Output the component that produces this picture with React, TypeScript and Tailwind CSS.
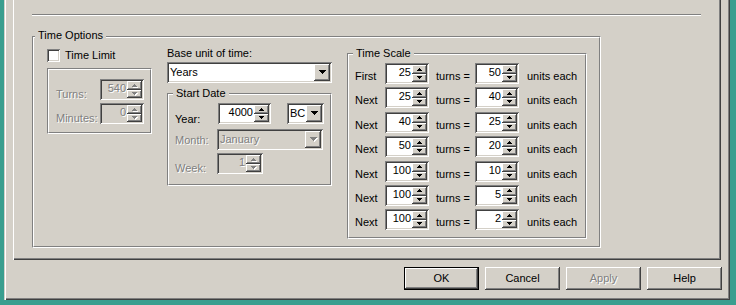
import React from 'react';

const sunken =
  'shadow-[inset_1px_1px_0_#808080,inset_-1px_-1px_0_#ffffff,inset_2px_2px_0_#404040,inset_-2px_-2px_0_#d4d0c8]';
const raised =
  'shadow-[inset_-1px_-1px_0_#404040,inset_1px_1px_0_#ffffff,inset_-2px_-2px_0_#808080,inset_2px_2px_0_#d4d0c8]';
const dis = 'text-[#808080] [text-shadow:1px_1px_0_#ffffff]';

type GroupProps = {
  label?: string;
  labelPos?: string;
  className?: string;
  inner?: string;
  children?: React.ReactNode;
};

// etched group box, label sits over the top line
const Group = ({ label, labelPos = '', className = '', inner = '', children }: GroupProps) => (
  <div
    className={`relative border border-t-[#808080] border-l-[#808080] border-r-white border-b-white ${className}`}
  >
    <div
      className={`w-full h-full border border-t-white border-l-white border-r-[#808080] border-b-[#808080] ${inner}`}
    >
      {children}
    </div>
    {label && <span className={`absolute px-[3px] bg-[#d4d0c8] ${labelPos}`}>{label}</span>}
  </div>
);

const Arrow = ({ dir, disabled }: { dir: 'up' | 'down'; disabled?: boolean }) => {
  const d = dir === 'up' ? 'M2 0h1v1h1v1h1v1H0V2h1V1h1z' : 'M0 0h5v1H4v1H3v1H2V2H1V1H0z';
  return (
    <svg width="6" height="4" viewBox="0 0 6 4" shapeRendering="crispEdges">
      {disabled && <path d={d} fill="#ffffff" transform="translate(1 1)" />}
      <path d={d} fill={disabled ? '#808080' : '#000000'} />
    </svg>
  );
};

const ComboArrow = ({ disabled }: { disabled?: boolean }) => {
  const d = 'M0 0h7v1H6v1H5v1H4v1H3V3H2V2H1V1H0z';
  return (
    <svg width="8" height="5" viewBox="0 0 8 5" shapeRendering="crispEdges">
      {disabled && <path d={d} fill="#ffffff" transform="translate(1 1)" />}
      <path d={d} fill={disabled ? '#808080' : '#000000'} />
    </svg>
  );
};

const Spin = ({ value, className = '', disabled }: { value: string; className?: string; disabled?: boolean }) => (
  <div className={`flex h-[21px] p-[2px] ${sunken} ${disabled ? 'bg-[#d4d0c8]' : 'bg-white'} ${className}`}>
    <div className={`flex-1 text-right pr-[1px] leading-[14px] ${disabled ? dis : ''}`}>{value}</div>
    <div className="w-[15px] flex flex-col">
      <div className={`h-[9px] flex items-center justify-center pl-[1px] bg-[#d4d0c8] ${raised}`}>
        <Arrow dir="up" disabled={disabled} />
      </div>
      <div className={`h-[8px] flex items-center justify-center pl-[1px] bg-[#d4d0c8] ${raised}`}>
        <Arrow dir="down" disabled={disabled} />
      </div>
    </div>
  </div>
);

const Combo = ({ value, className = '', disabled }: { value: string; className?: string; disabled?: boolean }) => (
  <div className={`flex h-[21px] p-[2px] ${sunken} ${disabled ? 'bg-[#d4d0c8]' : 'bg-white'} ${className}`}>
    <div className={`flex-1 flex items-center pl-[1px] ${disabled ? dis : ''}`}>{value}</div>
    <div className={`w-[16px] flex items-center justify-center pl-[1px] bg-[#d4d0c8] ${raised}`}>
      <ComboArrow disabled={disabled} />
    </div>
  </div>
);

const scale = [
  ['First', '25', '50'],
  ['Next', '25', '40'],
  ['Next', '40', '25'],
  ['Next', '50', '20'],
  ['Next', '100', '10'],
  ['Next', '100', '5'],
  ['Next', '100', '2'],
];

const App = () => {
  return (
    <div className="w-[736px] h-[305px] bg-[#3a9e8f] overflow-hidden text-[11px] leading-[13px] text-black font-['Liberation_Sans',Arial,sans-serif]">
      {/* Dialog */}
      <div className="ml-[4px] w-[726px] h-[300px] bg-[#d4d0c8] pl-[9px] flex flex-col shadow-[inset_1px_0_0_#d4d0c8,inset_2px_0_0_#ffffff,inset_-1px_-1px_0_#404040,inset_-2px_-2px_0_#808080]">
        {/* Tab page */}
        <div className="w-[708px] h-[260px] pl-[19px] pt-[14px] shadow-[inset_1px_0_0_#ffffff,inset_-1px_-1px_0_#404040,inset_-2px_-2px_0_#808080]">
          <div className="w-[669px] h-[2px] bg-white shadow-[inset_0_1px_0_#808080]" />

          <Group
            label="Time Options"
            labelPos="left-[2px] top-[-8px]"
            className="mt-[20px] w-[569px] h-[212px]"
            inner="pt-[9px] pl-[13px] flex items-start gap-[15px]"
          >
            {/* Time limit */}
            <div className="mt-[2px] w-[105px] flex flex-col">
              <div className="flex items-center h-[13px]">
                <div className={`w-[13px] h-[13px] bg-white ${sunken}`} />
                <span className="ml-[5px]">Time Limit</span>
              </div>
              <Group className="mt-[6px] w-[105px] h-[66px]" inner="pt-[9px] pl-[7px] pr-[6px] flex flex-col gap-[3px]">
                <div className="flex justify-between h-[21px]">
                  <span className={`pt-[9px] ${dis}`}>Turns:</span>
                  <Spin value="540" disabled className="w-[44px]" />
                </div>
                <div className="flex justify-between h-[21px]">
                  <span className={`pt-[9px] ${dis}`}>Minutes:</span>
                  <Spin value="0" disabled className="w-[44px]" />
                </div>
              </Group>
            </div>

            {/* Base unit + start date */}
            <div className="w-[165px] flex flex-col">
              <span>Base unit of time:</span>
              <Combo value="Years" className="mt-[2px] w-[165px]" />
              <Group
                label="Start Date"
                labelPos="left-[5px] top-[-7px]"
                className="mt-[10px] w-[165px] h-[93px]"
                inner="pt-[8px] pl-[6px] flex flex-col"
              >
                <div className="flex h-[21px]">
                  <span className="w-[43px] pt-[10px]">Year:</span>
                  <Spin value="4000" className="w-[53px]" />
                  <Combo value="BC" className="ml-[16px] w-[37px]" />
                </div>
                <div className="flex h-[21px] mt-[5px]">
                  <span className={`w-[42px] pt-[5px] ${dis}`}>Month:</span>
                  <Combo value="January" disabled className="w-[106px]" />
                </div>
                <div className="flex h-[21px] mt-[3px]">
                  <span className={`w-[42px] pt-[9px] ${dis}`}>Week:</span>
                  <Spin value="1" disabled className="w-[46px]" />
                </div>
              </Group>
            </div>

            {/* Time scale */}
            <Group
              label="Time Scale"
              labelPos="left-[5px] top-[-7px]"
              className="mt-[6px] w-[240px] h-[186px]"
              inner="pt-[8px] pl-[6px] flex flex-col gap-[3.4px]"
            >
              {scale.map(([l, a, b], i) => (
                <div key={i} className="flex h-[21px]">
                  <span className="w-[30px] pt-[7px]">{l}</span>
                  <Spin value={a} className="w-[44px]" />
                  <span className="ml-[7px] w-[39px] pt-[7px]">turns =</span>
                  <Spin value={b} className="w-[44px]" />
                  <span className="ml-[8px] pt-[7px]">units each</span>
                </div>
              ))}
            </Group>
          </Group>
        </div>

        {/* Buttons */}
        <div className="mt-[7px] flex justify-end gap-[6px] pr-[8px]">
          <div className="w-[75px] h-[23px] border border-black flex">
            <div className={`flex-1 flex items-center justify-center ${raised}`}>OK</div>
          </div>
          <div className={`w-[75px] h-[23px] flex items-center justify-center ${raised}`}>Cancel</div>
          <div className={`w-[75px] h-[23px] flex items-center justify-center ${raised} ${dis}`}>Apply</div>
          <div className={`w-[75px] h-[23px] flex items-center justify-center ${raised}`}>Help</div>
        </div>
      </div>
    </div>
  );
};

export default App;
